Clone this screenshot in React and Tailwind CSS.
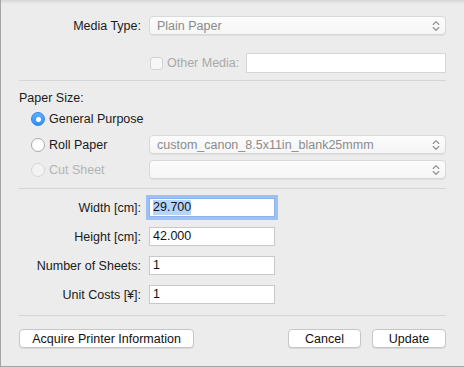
import React from "react";

const font = { fontFamily: '"Liberation Sans", Arial, "Helvetica Neue", sans-serif' };

function Chevrons({ color = "#8e8e8e" }) {
  return (
    <svg width="8" height="12" viewBox="0 0 8 12" fill="none" stroke={color} strokeWidth="1.1" strokeLinecap="round" strokeLinejoin="round">
      <path d="M1.2 4.5 L4 1.6 L6.8 4.5" />
      <path d="M1.2 7.5 L4 10.4 L6.8 7.5" />
    </svg>
  );
}

function Popup({ text, className = "" }) {
  return (
    <div className={"flex items-center h-[19px] w-[297px] rounded-[4px] border border-[#d9d9d9] bg-gradient-to-b from-[#fcfcfc] to-[#f5f5f5] shadow-[0_1px_0_rgba(0,0,0,0.06)] pl-[7px] pr-[5px] " + className}>
      <span className="flex-1 text-[12.5px] text-[#8b8b8b] leading-[16px] truncate">{text}</span>
      <Chevrons />
    </div>
  );
}

function Radio({ state }) {
  if (state === "on") {
    return (
      <div className="w-[14px] h-[14px] rounded-full bg-gradient-to-b from-[#5fb0fd] to-[#2b8ef9] border border-[#2a86ee] flex items-center justify-center">
        <div className="w-[5px] h-[5px] rounded-full bg-white" />
      </div>
    );
  }
  const border = state === "disabled" ? "border-[#d6d6d6]" : "border-[#a9a9a9]";
  const bg = state === "disabled" ? "bg-[#f3f3f3]" : "bg-white";
  return <div className={"w-[14px] h-[14px] rounded-full border " + border + " " + bg} />;
}

function Field({ label, value, focused }) {
  return (
    <div className="flex items-center h-[19px]">
      <div className="w-[122px] text-right text-[12.5px] text-[#1a1a1a] leading-[16px]">{label}</div>
      <div
        className={
          "ml-[8px] w-[126px] h-[19px] bg-white border flex items-center pl-[3px] " +
          (focused
            ? "border-[#8fb3e6] shadow-[0_0_0_3px_#9cc1f2]"
            : "border-[#c9c9c9]")
        }
      >
        <span className={"text-[12.5px] leading-[15px] text-[#111] " + (focused ? "bg-[#b5d5fd]" : "")}>{value}</span>
      </div>
    </div>
  );
}

function Button({ children, className = "" }) {
  return (
    <div className={"h-[19px] flex items-center justify-center rounded-[4px] border border-[#c6c6c6] bg-white shadow-[0_1px_0_rgba(0,0,0,0.08)] text-[12.5px] text-[#111] leading-[16px] " + className}>
      {children}
    </div>
  );
}

export default function App() {
  return (
    <div style={font} className="w-[464px] h-[367px] bg-[#ececec] border-l border-b border-[#a4a4a4] relative overflow-hidden">
      <div className="absolute top-0 left-0 right-0 h-[4px] bg-gradient-to-b from-[#d6d6d6] to-[#ececec]" />
      <div className="relative flex flex-col pt-[16px]">
        {/* Media Type */}
        <div className="flex items-center h-[19px]">
          <div className="ml-[18px] w-[122px] text-right text-[12.5px] text-[#1a1a1a] leading-[16px]">Media Type:</div>
          <Popup text="Plain Paper" className="ml-[8px]" />
        </div>
        {/* Other media */}
        <div className="flex items-center h-[20px] mt-[18px]">
          <div className="ml-[149px] w-[13px] h-[13px] rounded-[3px] border border-[#d3d3d3] bg-[#f7f7f7]" />
          <div className="ml-[4px] text-[12.5px] text-[#a9a9a9] leading-[16px]">Other Media:</div>
          <div className="ml-auto mr-[18px] w-[200px] h-[20px] bg-white border border-[#d6d6d6]" />
        </div>
        <div className="mt-[7px] ml-[18px] w-[427px] h-px bg-[#d6d6d6]" />
        {/* Paper size */}
        <div className="mt-[9px] ml-[18px] text-[12.5px] text-[#1a1a1a] leading-[16px]">Paper Size:</div>
        <div className="mt-[5px] ml-[30px] flex items-center h-[16px] gap-[4px]">
          <Radio state="on" />
          <span className="text-[12.5px] text-[#1a1a1a] leading-[16px]">General Purpose</span>
        </div>
        <div className="mt-[8px] flex items-center h-[19px]">
          <div className="ml-[30px] w-[110px] flex items-center gap-[4px]">
            <Radio state="off" />
            <span className="text-[12.5px] text-[#1a1a1a] leading-[16px]">Roll Paper</span>
          </div>
          <Popup text="custom_canon_8.5x11in_blank25mmm" className="ml-[8px]" />
        </div>
        <div className="mt-[6px] flex items-center h-[19px]">
          <div className="ml-[30px] w-[110px] flex items-center gap-[4px]">
            <Radio state="disabled" />
            <span className="text-[12.5px] text-[#b4b4b4] leading-[16px]">Cut Sheet</span>
          </div>
          <Popup text="" className="ml-[8px]" />
        </div>
        <div className="mt-[9px] ml-[18px] w-[427px] h-px bg-[#d6d6d6]" />
        {/* Fields */}
        <div className="mt-[9px] ml-[18px] flex flex-col gap-[10px]">
          <Field label="Width [cm]:" value="29.700" focused />
          <Field label="Height [cm]:" value="42.000" />
          <Field label="Number of Sheets:" value="1" />
          <Field label="Unit Costs [¥]:" value="1" />
        </div>
        <div className="mt-[11px] ml-[18px] w-[427px] h-px bg-[#d6d6d6]" />
        {/* Buttons */}
        <div className="mt-[13px] flex items-center">
          <Button className="ml-[18px] w-[175px]">Acquire Printer Information</Button>
          <Button className="ml-auto w-[73px]">Cancel</Button>
          <Button className="ml-[11px] mr-[18px] w-[74px]">Update</Button>
        </div>
      </div>
    </div>
  );
}
